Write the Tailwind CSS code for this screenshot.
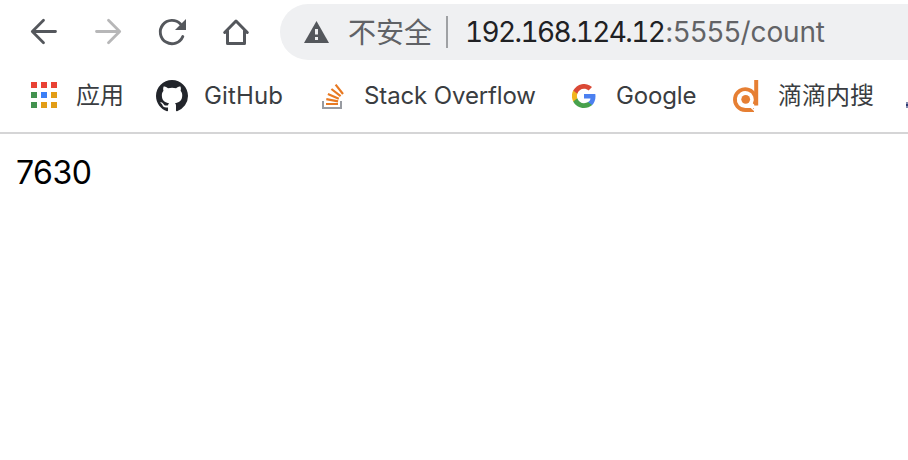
<!DOCTYPE html>
<html lang="zh-CN">
<head>
<meta charset="utf-8">
<title>192.168.124.12:5555/count</title>
<script src="https://cdn.jsdelivr.net/npm/@tailwindcss/browser@4"></script>
</head>
<body class="h-[460px] w-[908px] overflow-hidden bg-white font-[Inter,'Noto_Sans_CJK_SC',sans-serif]">
<header class="border-b-2 border-[#d5d5d6]">
  <div class="flex h-16 items-center pl-7">
    <nav class="flex shrink-0 gap-8 text-[#54575c]">
      <svg class="size-8" viewBox="0 0 32 32" fill="none" stroke="currentColor" stroke-width="2.8" stroke-linecap="round" stroke-linejoin="round"><path d="M27.500 15.500H4.500M15.500 4.300L4.300 15.500L15.500 26.700"/></svg>
      <svg class="size-8 text-[#b7b7b8]" viewBox="0 0 32 32" fill="none" stroke="currentColor" stroke-width="2.8" stroke-linecap="round" stroke-linejoin="round"><path d="M4.500 15.500H27.500M16.500 4.300L27.700 15.500L16.500 26.700"/></svg>
      <svg class="size-8" viewBox="0 0 32 32"><path d="M26.800 20.500A11.700 11.700 0 1 1 24.500 8" fill="none" stroke="currentColor" stroke-width="2.9" stroke-linecap="round"/><path d="M30 3V14H19Z" fill="currentColor"/></svg>
      <svg class="size-8" viewBox="0 0 32 32" fill="none" stroke="currentColor" stroke-width="3" stroke-linejoin="round" stroke-linecap="round"><path d="M4.700 16.500L16 5L27.300 16.500M7.500 14.500V27.500H24.500V14.500"/></svg>
    </nav>
    <div class="ml-7 flex h-14 grow items-center rounded-l-full bg-[#eff0f2] pl-6 whitespace-nowrap">
      <svg class="h-[22px] w-[25px] shrink-0" viewBox="0 0 25 22"><path d="M12.500 0L25 22H0Z" fill="#54575c"/><path d="M11 8H14V13.500H11ZM11 16H14V19H11Z" fill="#eff0f2"/></svg>
      <span class="ml-[19px] w-[84px] pt-0.5 text-[28px] leading-8 text-[#606266]">不安全</span>
      <span class="ml-[14px] h-8 w-[2px] bg-[#9fa1a4]"></span>
      <span class="ml-[17px] text-[28px] leading-8 text-[#202124]"><span class="tracking-[-1.65px] tabular-nums">192.168.124.12</span><span class="ml-px tracking-[-0.15px] text-[#626366]">:5555/count</span></span>
    </div>
  </div>
  <div class="flex h-[68px] items-start pt-4 text-2xl leading-8 whitespace-nowrap text-[#3a3d41]">
    <div class="ml-7 flex w-24 shrink-0 gap-4">
      <svg class="size-8 shrink-0" viewBox="0 0 32 32"><path d="M3 2h6v6H3zM13 2h6v6h-6zM23 2h6v6h-6z" fill="#e94235"/><path d="M3 12h6v6H3zM3 22h6v6H3z" fill="#43924f"/><path d="M13 12h6v6h-6z" fill="#3c7ff5"/><path d="M23 12h6v6h-6zM13 22h6v6h-6zM23 22h6v6h-6z" fill="#e29d17"/></svg>
      <span>应用</span>
    </div>
    <div class="ml-8 flex w-32 shrink-0 gap-4">
      <svg class="size-8 shrink-0" viewBox="0 0 16 16" fill="#22252b"><path d="M8 0C3.58 0 0 3.58 0 8c0 3.54 2.29 6.53 5.47 7.59.4.07.55-.17.55-.38 0-.19-.01-.82-.01-1.49-2.01.37-2.53-.49-2.69-.94-.09-.23-.48-.94-.82-1.13-.28-.15-.68-.52-.01-.53.63-.01 1.08.58 1.23.82.72 1.21 1.87.87 2.33.66.07-.52.28-.87.51-1.07-1.78-.2-3.64-.89-3.64-3.95 0-.87.31-1.59.82-2.15-.08-.2-.36-1.02.08-2.12 0 0 .67-.21 2.2.82.64-.18 1.32-.27 2-.27s1.36.09 2 .27c1.53-1.04 2.2-.82 2.2-.82.44 1.1.16 1.92.08 2.12.51.56.82 1.27.82 2.15 0 3.07-1.87 3.75-3.65 3.95.29.25.54.73.54 1.48 0 1.07-.01 1.93-.01 2.2 0 .21.15.46.55.38A8.01 8.01 0 0 0 16 8c0-4.42-3.58-8-8-8z"/></svg>
      <span class="tracking-[0.15px]">GitHub</span>
    </div>
    <div class="ml-8 flex w-[220px] shrink-0 gap-4">
      <svg class="size-8 shrink-0" viewBox="0 0 32 32" fill="none" stroke-width="2"><path d="M7 21V28H25V21" stroke="#989ba1"/><path d="M10 24H22M10.300 19.200L22.100 21.400M11.900 13.900L22.800 18.700M15.400 9L24.600 16.200M19.600 4.600L27 14" stroke="#e87922" stroke-width="2.2"/></svg>
      <span class="tracking-[-0.12px]">Stack Overflow</span>
    </div>
    <div class="ml-8 flex w-32 shrink-0 gap-4">
      <svg class="size-8 shrink-0 p-1" viewBox="0 0 24 24"><path d="M23.500 12.300c0-.9-.1-1.600-.2-2.400H12v4.500h6.500c-.3 1.600-1.100 2.900-2.500 3.700v3.100h4c2.300-2.100 3.500-5.200 3.500-8.900z" fill="#4b80f0"/><path d="M12 24c3.300 0 6-1.100 8-2.900l-4-3.100c-1.100.7-2.500 1.200-4 1.200-3.100 0-5.800-2.100-6.700-5H1.200v3.200C3.200 21.300 7.300 24 12 24z" fill="#48a14c"/><path d="M5.300 14.300a7.300 7.300 0 0 1 0-4.600V6.600H1.200a12 12 0 0 0 0 10.800z" fill="#f2b51d"/><path d="M12 4.800c1.800 0 3.300.6 4.600 1.800L20 3.100A12 12 0 0 0 1.200 6.600l4.100 3.100c.9-2.800 3.600-4.900 6.700-4.900z" fill="#da4936"/></svg>
      <span class="tracking-[-0.15px]">Google</span>
    </div>
    <div class="ml-8 flex w-[146px] shrink-0 gap-[18px]">
      <svg class="size-8 shrink-0" viewBox="0 0 32 32" fill="none"><path d="M28.200 0V25.500" stroke="#e67f33" stroke-width="4"/><path d="M26.500 24.500A10.400 10.400 0 1 0 17.500 30H26" stroke="#e67f33" stroke-width="3.800"/><circle cx="17.700" cy="19.300" r="4.400" fill="#e67f33"/><path d="M20.500 25L27 31" stroke="white" stroke-width="1.500"/></svg>
      <span>滴滴内搜</span>
    </div>
    <span class="ml-8 mt-[22px] h-1.5 w-1 shrink-0 border-y-2 border-[#8088ad] bg-[#2c3b73]"></span>
  </div>
</header>
<main class="px-4 pt-5 text-[32px] leading-[38px] tracking-[-0.5px] text-black">7630</main>
</body>
</html>
